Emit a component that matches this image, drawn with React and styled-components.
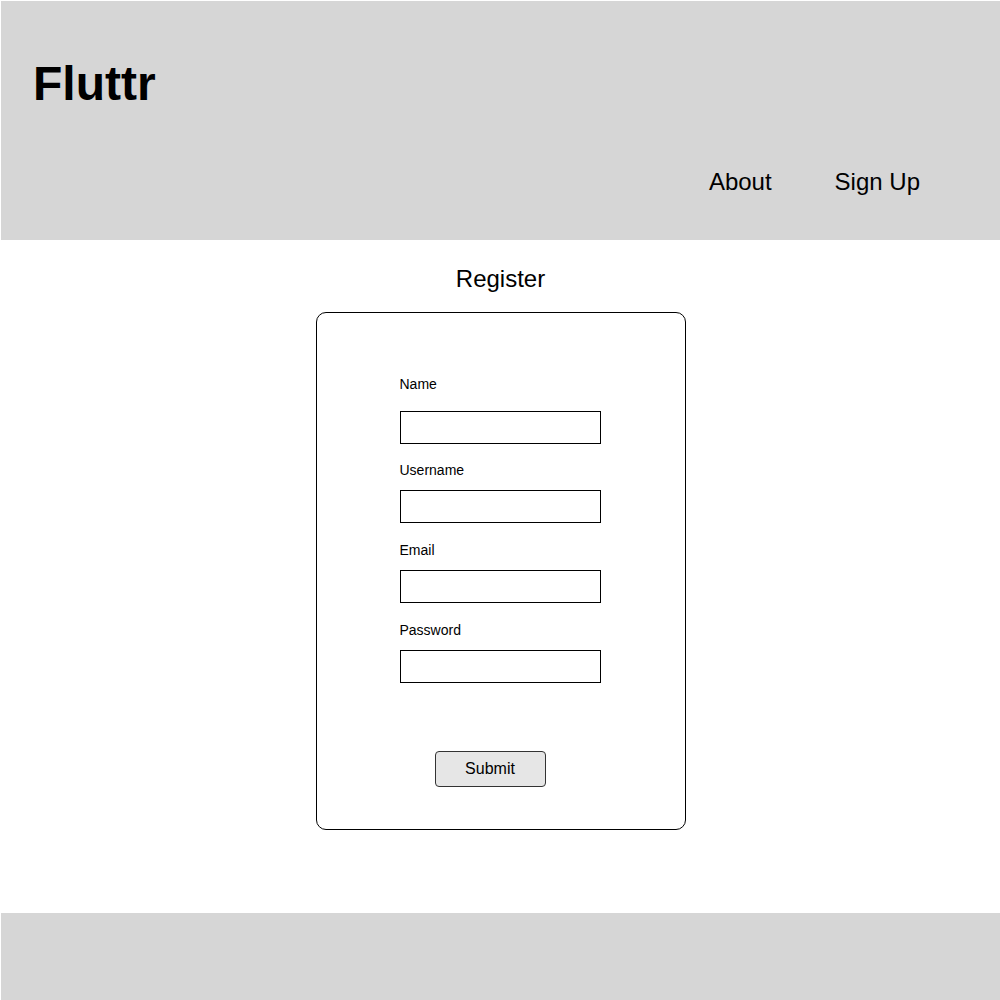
import React from 'react';
import styled, { createGlobalStyle } from 'styled-components';

const GlobalStyle = createGlobalStyle`
  html, body {
    margin: 0;
    padding: 0;
    background: #ffffff;
  }
  body {
    font-family: "Liberation Sans", Arial, Helvetica, sans-serif;
    color: #000;
  }
`;

const Page = styled.div`
  padding: 1px 0 0 1px;
  min-height: 1000px;
  box-sizing: border-box;
  display: flex;
  flex-direction: column;
`;

const Header = styled.header`
  height: 239px;
  box-sizing: border-box;
  background: #d6d6d6;
  padding: 55px 80px 44px 32px;
  display: flex;
  flex-direction: column;
  justify-content: space-between;
`;

const Logo = styled.h1`
  margin: 0;
  font-size: 48px;
  font-weight: 700;
  line-height: normal;
`;

const Nav = styled.nav`
  display: flex;
  justify-content: flex-end;
  gap: 63px;
`;

const NavLink = styled.a`
  font-size: 24px;
  line-height: normal;
  color: #000;
  text-decoration: none;
  cursor: pointer;
`;

const Main = styled.main`
  display: flex;
  flex-direction: column;
  align-items: center;
  padding-top: 25px;
`;

const Title = styled.h2`
  margin: 0 0 19px;
  font-size: 24px;
  font-weight: 400;
  line-height: normal;
`;

const Card = styled.form`
  width: 370px;
  box-sizing: border-box;
  border: 1px solid #000;
  border-radius: 10px;
  padding: 63px 83px 42px;
  display: flex;
  flex-direction: column;
`;

const Fields = styled.div`
  width: 201px;
  display: flex;
  flex-direction: column;
`;

const Field = styled.label`
  display: flex;
  flex-direction: column;
  margin-top: ${p => p.$spaceAbove}px;
`;

const LabelText = styled.span`
  font-size: 14px;
  line-height: normal;
  margin-bottom: ${p => (p.$wide ? 19 : 12)}px;
`;

const Input = styled.input`
  width: 201px;
  height: 33px;
  box-sizing: border-box;
  border: 1px solid #000;
  border-radius: 0;
  background: #fff;
  padding: 0 6px;
  font: inherit;
  font-size: 14px;
  outline: none;
`;

const SubmitButton = styled.button`
  margin: 68px 0 0 35px;
  width: 111px;
  height: 36px;
  box-sizing: border-box;
  background: #e6e6e6;
  border: 1px solid #333;
  border-radius: 4px;
  font-family: "Liberation Sans", Arial, sans-serif;
  font-size: 16px;
  color: #000;
  padding: 0;
  cursor: pointer;
`;

const Footer = styled.footer`
  margin-top: 83px;
  height: 87px;
  background: #d6d6d6;
`;

const fields = [
  { name: 'name', label: 'Name', type: 'text', space: 0 },
  { name: 'username', label: 'Username', type: 'text', space: 18 },
  { name: 'email', label: 'Email', type: 'email', space: 19 },
  { name: 'password', label: 'Password', type: 'password', space: 19 },
];

const App = () => {
  return (
    <>
      <GlobalStyle />
      <Page>
        <Header>
          <Logo>Fluttr</Logo>
          <Nav>
            <NavLink>About</NavLink>
            <NavLink>Sign Up</NavLink>
          </Nav>
        </Header>
        <Main>
          <Title>Register</Title>
          <Card onSubmit={e => e.preventDefault()}>
            <Fields>
              {fields.map((f, i) => (
                <Field key={f.name} $spaceAbove={f.space}>
                  <LabelText $wide={i === 0}>{f.label}</LabelText>
                  <Input type={f.type} name={f.name} />
                </Field>
              ))}
            </Fields>
            <SubmitButton type="submit">Submit</SubmitButton>
          </Card>
        </Main>
        <Footer />
      </Page>
    </>
  );
};

export default App;
